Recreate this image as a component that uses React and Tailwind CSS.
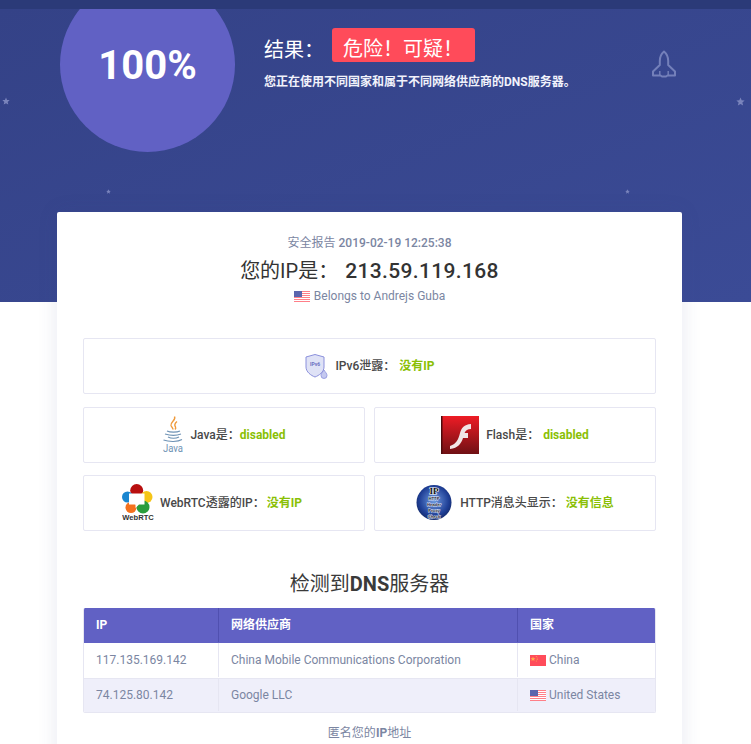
import React from 'react';

const font = { fontFamily: 'Roboto, "Noto Sans CJK SC", sans-serif' };

const Star = ({ className }) => (
    <svg viewBox="0 0 10 10" className={className} fill="#7a84bc">
        <path d="M5 0.5 6.3 3.6 9.6 3.9 7.1 6.1 7.9 9.4 5 7.7 2.1 9.4 2.9 6.1 0.4 3.9 3.7 3.6Z" />
    </svg>
);

const Rocket = () => (
    <svg viewBox="0 0 26 28" className="absolute left-[651px] top-[41px] w-[26px] h-[28px]" fill="none" stroke="#7480ba" strokeWidth="2" strokeLinejoin="round">
        <path d="M13 1.5C10 4 8.8 7.5 8.8 11V15L2 21.5V25.5H9.5L11 26.5H15L16.5 25.5H24V21.5L17.2 15V11C17.2 7.5 16 4 13 1.5Z" />
        <path d="M8.8 21V25M17.2 21V25" strokeWidth="1.4" />
    </svg>
);

const UsFlag = () => (
    <svg viewBox="0 0 16 11" className="w-[16px] h-[11px] shrink-0">
        <rect width="16" height="11" fill="#fff" />
        <path d="M0 0.5H16M0 2.5H16M0 4.5H16M0 6.5H16M0 8.5H16M0 10.5H16" stroke="#ff7f88" strokeWidth="1" />
        <rect width="8" height="6" fill="#5b65ad" />
    </svg>
);

const CnFlag = () => (
    <svg viewBox="0 0 16 11" className="w-[16px] h-[11px] shrink-0">
        <rect width="16" height="11" fill="#ff4c5a" />
        <path d="M3 1.5 3.7 3.2 5.4 3.3 4.1 4.4 4.5 6 3 5.1 1.5 6 1.9 4.4 0.6 3.3 2.3 3.2Z" fill="#ffb04a" />
        <circle cx="6.3" cy="1.6" r="0.5" fill="#ffb04a" />
        <circle cx="7.2" cy="3" r="0.5" fill="#ffb04a" />
        <circle cx="7.2" cy="4.6" r="0.5" fill="#ffb04a" />
        <circle cx="6.3" cy="5.9" r="0.5" fill="#ffb04a" />
    </svg>
);

const ShieldIcon = () => (
    <svg viewBox="0 0 24 26" className="w-[24px] h-[26px]">
        <path d="M11 1.5 20 4V14C20 19 15 22.5 11 24 7 22.5 2 19 2 14V4Z" fill="#dfe2f6" stroke="#8b90dc" strokeWidth="1" />
        <text x="11" y="13" textAnchor="middle" fontSize="5" fontWeight="700" fill="#6a6fc0" fontFamily="Roboto">IPv6</text>
        <path d="M20 17C21.5 19.5 23 20.5 23 22.5A3 3 0 0 1 17 22.5C17 20.5 18.5 19.5 20 17Z" fill="#c5c9f0" stroke="#8b90dc" strokeWidth="0.8" />
    </svg>
);

const JavaIcon = () => (
    <svg viewBox="0 0 22 38" className="w-[22px] h-[38px]">
        <path d="M12.5 0.5C14.5 4 8 6 9 9.5 9.6 11 11 12 11 13.5M15 5.5C12.5 7.5 12.5 9.5 13.5 11 14 12 13.5 13 13 13.5" fill="none" stroke="#ef9a3c" strokeWidth="1.4" />
        <path d="M5 15C8 16.5 15 16.5 18 15M3 18C8 19.5 15 19.5 19 18M6 21C9 22.5 14 22.5 17 21M1.5 24C7 26 16 26 20 23.5" fill="none" stroke="#6f93b5" strokeWidth="1.1" />
        <text x="11" y="35.5" textAnchor="middle" fontSize="10" textLength="20" lengthAdjust="spacingAndGlyphs" fill="#6f93b5" fontFamily="Roboto">Java</text>
    </svg>
);

const FlashIcon = () => (
    <svg viewBox="0 0 38 38" className="w-[38px] h-[38px]">
        <defs>
            <linearGradient id="flashBg" x1="0" y1="0" x2="0" y2="1">
                <stop offset="0" stopColor="#ee1c25" />
                <stop offset="1" stopColor="#6f1014" />
            </linearGradient>
        </defs>
        <rect width="38" height="38" fill="url(#flashBg)" />
        <rect width="1.5" height="38" fill="#4d0a0d" />
        <path d="M30 8C23 8.5 20.5 12 19 17 17.5 23 15.5 28 9 30V33C17 32.5 20.5 27 22 22H27V17H23.5C24.8 14.5 26.5 13 30 13Z" fill="#f1e6e6" />
    </svg>
);

const WebrtcIcon = () => (
    <svg viewBox="0 0 32 38" className="w-[32px] h-[38px]">
        <circle cx="14.7" cy="6.5" r="6.5" fill="#b80f0f" />
        <circle cx="24.5" cy="13" r="6" fill="#f5c518" />
        <circle cx="5.5" cy="13" r="5.5" fill="#1a86d0" />
        <circle cx="9" cy="23.5" r="5.5" fill="#f4711e" />
        <circle cx="21" cy="23" r="6.5" fill="#2a9d3c" />
        <path d="M7 9.5H22.5V20.5H17L13.5 24V20.5H7Z" fill="#fff" />
        <text x="16" y="36" textAnchor="middle" fontSize="7.6" fontWeight="700" fill="#333" fontFamily="Liberation Sans">WebRTC</text>
    </svg>
);

const HttpIcon = () => (
    <svg viewBox="0 0 36 38" className="w-[36px] h-[38px]">
        <defs>
            <radialGradient id="globe" cx="0.5" cy="0.45" r="0.6">
                <stop offset="0" stopColor="#6f9be0" />
                <stop offset="0.7" stopColor="#1f3f96" />
                <stop offset="1" stopColor="#10245e" />
            </radialGradient>
        </defs>
        <circle cx="18" cy="18.5" r="17.5" fill="url(#globe)" />
        <text x="18" y="9.5" textAnchor="middle" fontSize="9" fontWeight="700" fill="#111" stroke="#fff" strokeWidth="1.2" paintOrder="stroke" fontFamily="Liberation Serif">IP</text>
        <g textAnchor="middle" fontSize="4.2" fontWeight="700" fill="#1a1a2e" stroke="#e8eefc" strokeWidth="0.8" paintOrder="stroke" fontFamily="Liberation Sans">
            <text x="18" y="15.5">HTTP</text>
            <text x="18" y="21.5">Header</text>
            <text x="18" y="27.5">Proxy</text>
            <text x="18" y="33.5">Check</text>
        </g>
    </svg>
);

const CheckBox = ({ icon, label, value, gapClass = 'gap-[6px]', valueClass = 'ml-[2px]', boxClass = '' }) => (
    <div className={`flex items-center justify-center ${gapClass} ${boxClass} bg-white border border-[#e6e6f2] rounded-[2px]`}>
        {icon}
        <span className="text-[12px] text-[#484848] font-medium whitespace-pre">
            {label}
            <span className={`text-[#8abf05] font-bold ${valueClass}`}>{value}</span>
        </span>
    </div>
);

const rows = [
    { ip: '117.135.169.142', isp: 'China Mobile Communications Corporation', country: 'China', flag: <CnFlag />, bg: 'bg-white', height: 'h-[35px] pb-[1px]' },
    { ip: '74.125.80.142', isp: 'Google LLC', country: 'United States', flag: <UsFlag />, bg: 'bg-[#efeffa]', height: 'h-[34px] pb-[1px] border-t border-[#e6e6f2]' },
];

export default function App() {
    return (
        <div className="h-[744px] overflow-hidden bg-white" style={font}>
            <div className="h-[9px] bg-[#2b3a78]" />
            <div className="relative h-[293px] overflow-hidden bg-gradient-to-br from-[#344287] to-[#3b4b96]">
                <Star className="absolute left-[2px] top-[88px] w-[8px] h-[8px]" />
                <Star className="absolute left-[736px] top-[88px] w-[9px] h-[9px]" />
                <Star className="absolute left-[106px] top-[180px] w-[5px] h-[5px]" />
                <Star className="absolute left-[625px] top-[180px] w-[5px] h-[5px]" />
                <Rocket />
                <div className="flex pl-[60px]">
                    <div className="w-[175px] h-[175px] -mt-[32px] shrink-0 rounded-full bg-[#6161c4] flex items-center justify-center pt-[2px] text-white text-[40px] font-bold">100%</div>
                    <div className="ml-[29px] pt-[19px]">
                        <div className="flex items-center h-[34px]">
                            <span className="text-[20px] text-white w-[68px] pt-[9px]">结果：</span>
                            <span className="h-[34px] w-[143px] pl-[11px] pt-[6px] rounded-[3px] bg-[#ff4b5a] text-white text-[20px]">危险！可疑！</span>
                        </div>
                        <p className="mt-[11px] text-[12px] font-bold text-[#f1f2fb]">您正在使用不同国家和属于不同网络供应商的DNS服务器。</p>
                    </div>
                </div>
            </div>
            <div className="relative -mt-[90px] ml-[57px] w-[625px] bg-white rounded-[2px] shadow-[0_0_20px_rgba(60,70,140,0.12)] px-[26px] pt-[23px]">
                <p className="text-center text-[12px] text-[#7b86a2] leading-[16px]">安全报告 <span className="font-medium">2019-02-19 12:25:38</span></p>
                <p className="mt-[6px] text-center text-[20px] text-[#333] leading-[28px] whitespace-pre">您的IP是： <span className="ml-[2px] text-[21px] tracking-[0.35px] font-medium">213.59.119.168</span></p>
                <div className="mt-[3px] flex items-center justify-center gap-[4px] text-[12px] text-[#7b86a2] leading-[16px]">
                    <UsFlag />
                    <span>Belongs to Andrejs Guba</span>
                </div>
                <div className="mt-[34px] grid grid-cols-2 gap-x-[9px] gap-y-[12.5px] grid-rows-[56px_56px_56px]">
                    <div className="col-span-2 grid">
                        <CheckBox icon={<ShieldIcon />} label="IPv6泄露：" value="没有IP" gapClass="gap-[7px]" valueClass="ml-[4px]" />
                    </div>
                    <CheckBox icon={<JavaIcon />} label="Java是：" value="disabled" valueClass="ml-0" />
                    <CheckBox icon={<FlashIcon />} label="Flash是：" value="disabled" gapClass="gap-[7px]" valueClass="ml-[4px]" />
                    <CheckBox icon={<WebrtcIcon />} label="WebRTC透露的IP：" value="没有IP" boxClass="pr-[24px]" />
                    <CheckBox icon={<HttpIcon />} label="HTTP消息头显示：" value="没有信息" gapClass="gap-[8px]" valueClass="ml-[3px]" />
                </div>
                <h2 className="mt-[39px] text-center text-[20px] leading-[28px] text-[#3a3a3a]">检测到<span className="font-bold">DNS</span>服务器</h2>
                <div className="mt-[10px] text-[12px] border border-[#e6e6f2] border-t-0 rounded-[2px] overflow-hidden">
                    <div className="grid grid-cols-[134px_299px_1fr] h-[35px] pb-[1px] bg-[#6161c4] text-white font-bold">
                        <div className="flex items-center pl-[12px]">IP</div>
                        <div className="flex items-center pl-[12px] border-l border-[#5050b0]">网络供应商</div>
                        <div className="flex items-center pl-[12px] border-l border-[#5050b0]">国家</div>
                    </div>
                    {rows.map((row) => (
                        <div key={row.ip} className={`grid grid-cols-[134px_299px_1fr] text-[#7b86a2] ${row.height} ${row.bg}`}>
                            <div className="flex items-center pl-[12px]">{row.ip}</div>
                            <div className="flex items-center pl-[12px] border-l border-[#e6e6f2]">{row.isp}</div>
                            <div className="flex items-center gap-[3px] pl-[12px] border-l border-[#e6e6f2]">{row.flag}<span>{row.country}</span></div>
                        </div>
                    ))}
                </div>
                <p className="mt-[12px] text-center text-[12px] leading-[16px] text-[#7b86a2]">匿名您的<span className="font-bold">IP</span>地址</p>
                <div className="h-[40px]" />
            </div>
        </div>
    );
}
